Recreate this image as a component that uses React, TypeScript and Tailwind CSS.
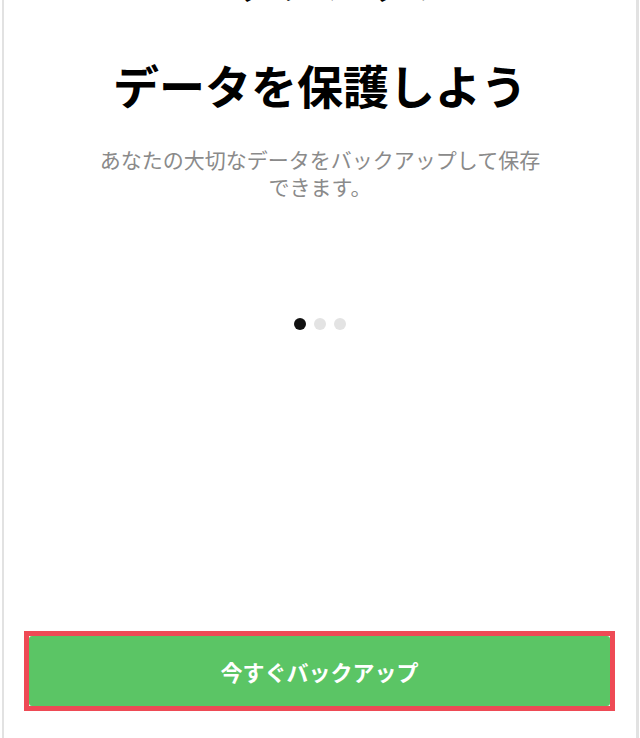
export default function App() {
  const jp = { fontFamily: '"Noto Sans CJK JP", "Noto Sans", sans-serif' };
  return (
    <div className="w-full h-[738px] bg-white pl-[2px] pr-[1px] overflow-hidden" style={jp}>
      <div className="h-full flex flex-col items-center bg-white border-l-2 border-r-[3px] border-[#e2e2e2]">
        <div className="h-[4px] overflow-hidden w-full flex justify-center">
          <div className="text-[45px] leading-[56px] font-bold text-black -mt-[49px]">バックアップ</div>
        </div>
        <h1 className="mt-[52px] text-[46px] leading-[56px] font-bold text-black">
          データを保護しよう
        </h1>
        <p className="mt-[34px] w-[452px] text-center text-[21px] leading-[27px] text-[#8a8a8a]">
          あなたの大切なデータをバックアップして保存できます。
        </p>
        <div className="mt-[118px] flex items-center gap-[8px]">
          <span className="w-[12px] h-[12px] rounded-full bg-[#111]" />
          <span className="w-[12px] h-[12px] rounded-full bg-[#e3e3e3]" />
          <span className="w-[12px] h-[12px] rounded-full bg-[#e3e3e3]" />
        </div>
        <div className="mt-auto w-full pl-[20px] pr-[21px] pb-[27px]">
          <div className="border-[5px] border-[#ee4a55] bg-white">
            <button className="w-full h-[70px] rounded-[3px] bg-[#5bc565] text-white text-[22px] font-semibold flex items-center justify-center">
              今すぐバックアップ
            </button>
          </div>
        </div>
      </div>
    </div>
  );
}
